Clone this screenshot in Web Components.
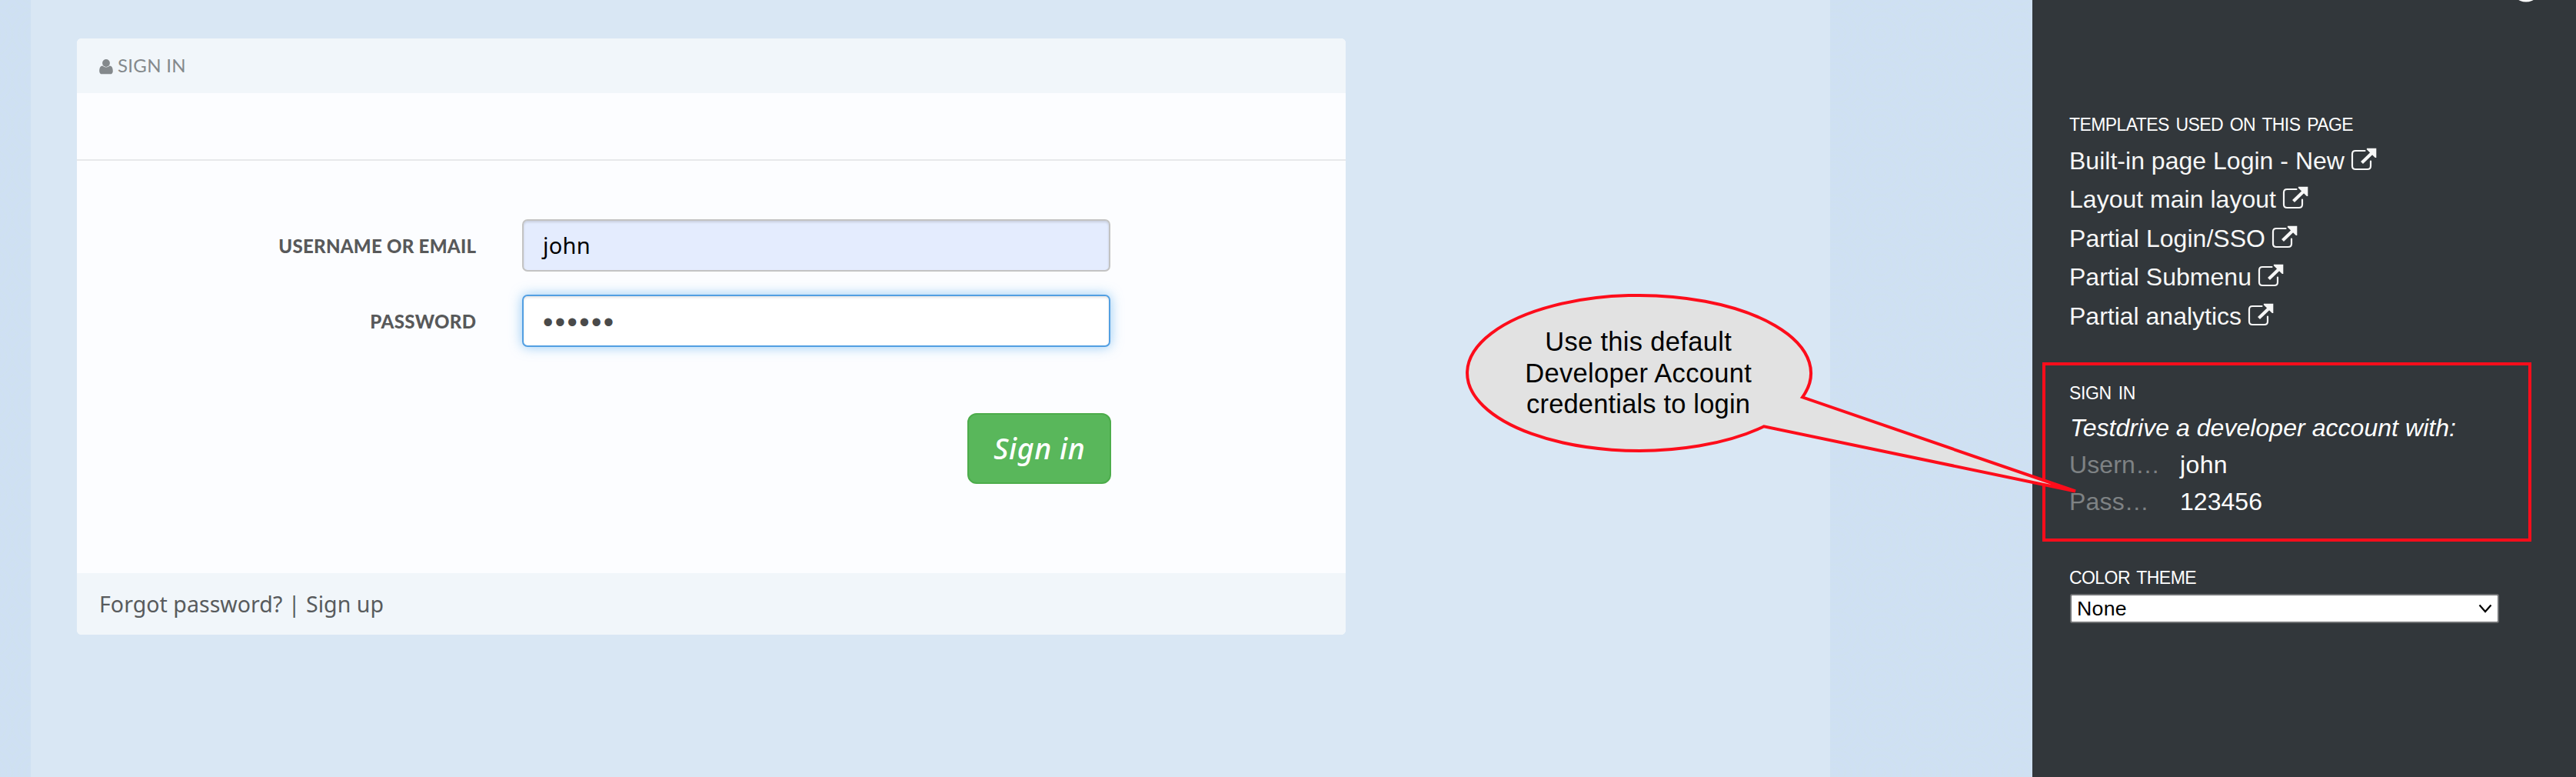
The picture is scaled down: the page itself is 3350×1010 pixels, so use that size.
<!DOCTYPE html>
<html lang="en">
<head>
<meta charset="utf-8">
<title>Sign in</title>
<style>
html,body{margin:0;height:1010px;overflow:hidden}
body{font-family:"Liberation Sans",sans-serif}
</style>
</head>
<body>
<portal-page></portal-page>
<script>
const define=(name,html,setup)=>customElements.define(name,class extends HTMLElement{
  connectedCallback(){
    if(this.shadowRoot)return;
    this.attachShadow({mode:'open'}).innerHTML=html;
    if(setup)setup(this,this.shadowRoot);
  }
});

// One line of text tracked out to a given advance width.
define('fit-text',`<style>:host{display:block;white-space:pre}span{display:inline-block;white-space:pre}</style><span><slot></slot></span>`,(el,root)=>{
  const span=root.querySelector('span'),n=el.textContent.length,w=+el.getAttribute('w');
  if(w){
    const ls=(w-span.getBoundingClientRect().width)/n;
    span.style.letterSpacing=ls+'px';
    span.style.marginRight=-ls+'px';
  }
});

define('icon-user',`<style>:host{display:block;width:18px;height:20px}svg{display:block}</style>
<svg width="18" height="20" viewBox="0 0 18 20" fill="#84898c"><ellipse cx="9" cy="5" rx="4.9" ry="5"/><path d="M4.4 8.6C1.4 8.8.2 11.6.2 15.400c0 2.400 1.300 3.900 3.300 3.900h11c2 0 3.300-1.500 3.300-3.900 0-3.800-1.200-6.600-4.200-6.800A6.400 6.400 0 0 1 9 10.600 6.400 6.400 0 0 1 4.400 8.600z"/></svg>`);

define('icon-external',`<style>:host{display:block;width:34px;height:30px}svg{display:block}</style>
<svg width="34" height="30" viewBox="0 0 34 30" fill="none"><path d="M18.500 4H6.300Q2 4 2 8.300v15.400Q2 28 6.300 28h15.400Q26 28 26 23.700V17.500" stroke="#f7f7f7" stroke-width="2.200" stroke-linecap="round"/><path d="M14.500 19.500L28 6.500" stroke="#f7f7f7" stroke-width="4.200"/><path d="M21 .7h12.300v12.200h-1.500L20.800 2.200z" fill="#f7f7f7"/></svg>`);

define('side-title',`<style>:host{display:block;height:30px;line-height:30px;font-size:23px;color:#fff;word-spacing:3px}</style><slot></slot>`);

define('template-link',`<style>:host{display:flex;align-items:flex-start;height:50.500px;line-height:50.500px;font-size:32px;color:#f7f7f7;gap:8px}icon-external{margin-top:8px}</style><slot></slot><icon-external></icon-external>`);

define('credential-row',`<style>:host{display:flex;height:48px;line-height:48px;font-size:32px;color:#fff}.k{width:144px;color:#7e8284}</style><div class="k"><slot name="key"></slot></div><slot></slot>`);

define('theme-select',`<style>:host{display:flex;box-sizing:border-box;width:558px;height:38px;border:2px solid #6f7173;border-radius:3px;background:#fff;color:#000;font-size:26.700px;line-height:34px;padding:0 7px 0 7px;align-items:center;justify-content:space-between}</style><slot></slot><svg width="18" height="12" viewBox="0 0 18 12" fill="none" stroke="#000" stroke-width="2.200"><path d="M1.500 1.500L9 10l7.500-8.500"/></svg>`);

define('side-panel',`<style>
:host{display:flex;flex-direction:column;box-sizing:border-box;width:707px;height:1010px;background:#32373b;padding-left:48px;overflow:hidden}
.top{height:147px;display:flex;align-items:flex-start;padding-left:580px}
.links{margin:6.500px 0 60px}
.about{font-style:italic;font-size:32px;line-height:48px;color:#fff;margin-top:6px;padding-left:1px}
.creds{margin-bottom:60px}
theme-select{margin:6px 0 0 1px}
</style>
<div class="top"><svg width="24" height="3" viewBox="0 0 24 3"><circle cx="14" cy="-17.500" r="20" fill="#fff"/></svg></div>
<side-title><fit-text w="369">TEMPLATES USED ON THIS PAGE</fit-text></side-title>
<div class="links">
<template-link><fit-text w="358">Built-in page Login - New</fit-text></template-link>
<template-link><fit-text w="269">Layout main layout</fit-text></template-link>
<template-link><fit-text w="255">Partial Login/SSO</fit-text></template-link>
<template-link><fit-text w="237">Partial Submenu</fit-text></template-link>
<template-link><fit-text w="224">Partial analytics</fit-text></template-link>
</div>
<side-title><fit-text w="86">SIGN IN</fit-text></side-title>
<div class="about"><fit-text w="502">Testdrive a developer account with:</fit-text></div>
<div class="creds">
<credential-row><fit-text slot="key" w="118">Usern…</fit-text><fit-text w="62">john</fit-text></credential-row>
<credential-row><fit-text slot="key" w="104">Pass…</fit-text><fit-text w="107">123456</fit-text></credential-row>
</div>
<side-title><fit-text w="165">COLOR THEME</fit-text></side-title>
<theme-select><fit-text w="65">None</fit-text></theme-select>`);

define('form-row',`<style>
:host{display:flex;height:68px;align-items:center;gap:60px}
.label{width:519px;display:flex;justify-content:flex-end;font:900 24px/30px Lato,sans-serif;color:#58595a;padding-top:2px}
.box{box-sizing:border-box;width:765px;height:68px;border:2px solid #c3c3c3;border-radius:7px;background:#e4ecfe;box-shadow:inset 0 2px 3px rgba(0,0,0,.12);padding-left:25px;display:flex;align-items:center;font:29px/60px "Noto Sans",sans-serif;color:#000}
:host([focused]) .box{background:#fff;border-color:#529fe2;box-shadow:inset 0 2px 3px rgba(0,0,0,.1),0 0 16px rgba(82,168,236,.6);color:#4a4a4a;font:38px/60px "Liberation Sans",sans-serif;padding-top:4px}
</style><div class="label"><slot name="label"></slot></div><div class="box"><slot></slot></div>`);

define('submit-button',`<style>:host{display:flex;box-sizing:border-box;width:187px;height:92px;border:2px solid #4cac4b;border-radius:12px;background:#59b75b;color:#fff;font:italic 500 37.500px/88px "Noto Sans","Open Sans",sans-serif;justify-content:center;align-items:center}</style><slot></slot>`);

define('login-card',`<style>
:host{display:block;width:1650px;height:775px;border-radius:6px;overflow:hidden;background:#fcfdff}
header{height:71px;box-sizing:border-box;background:#f1f6fa;display:flex;align-items:center;gap:6px;padding:0 0 1px 29px;font:24px/30px Lato,sans-serif;color:#84898c}
header icon-user{margin-top:3px}
.sub{height:88px;box-sizing:border-box;border-bottom:2px solid #e7e9eb}
.body{height:536px;box-sizing:border-box;padding-top:76px;display:flex;flex-direction:column;gap:30px}
.act{margin:56px 0 0 1158px}
footer{height:80px;background:#f1f6fa;display:flex;align-items:center;padding-left:29px;font:28.500px/78px "Noto Sans",sans-serif;color:#585b5d}
</style>
<header><icon-user></icon-user><fit-text w="89">SIGN IN</fit-text></header>
<div class="sub"></div>
<div class="body">
<form-row><fit-text slot="label" w="257">USERNAME OR EMAIL</fit-text><fit-text w="62">john</fit-text></form-row>
<form-row focused><fit-text slot="label" w="138">PASSWORD</fit-text><fit-text w="94.500">••••••</fit-text></form-row>
<div class="act"><submit-button><fit-text w="119">Sign in</fit-text></submit-button></div>
</div>
<footer><fit-text w="370">Forgot password? | Sign up</fit-text></footer>`);

define('callout-note',`<style>
:host{position:absolute;inset:0;pointer-events:none}
svg{position:absolute;left:0;top:0}
.text{position:absolute;left:1907px;top:424px;width:447px;display:flex;flex-direction:column;align-items:center;font-size:34.500px;line-height:40.500px;color:#000}
</style>
<svg width="3350" height="1010" viewBox="0 0 3350 1010"><rect x="2658" y="473" width="632" height="229" fill="none" stroke="#fd0d1b" stroke-width="4"/><path d="M2344 516.300A223.500 101 0 1 0 2294 554.300L2699 638.500Z" fill="#e2e2e2" stroke="#fd0d1b" stroke-width="4" stroke-linejoin="miter" stroke-miterlimit="3"/></svg>
<div class="text"><fit-text w="243">Use this default</fit-text><fit-text w="295">Developer Account</fit-text><fit-text w="291">credentials to login</fit-text></div>`);

define('portal-page',`<style>
:host{display:flex;position:relative;width:3350px;height:1010px;overflow:hidden;background-color:#cfe0f2;background-image:repeating-radial-gradient(circle at 30px 30px,#cfe0f3 0,#cfe0f3 3px,#cfe1f0 6px,#cfe0f3 8px);background-size:60px 60px;background-position:16px 14px}
main{margin:0 263px 0 40px;width:2340px;box-sizing:border-box;background:#d9e7f4;padding:50px 0 0 60px}
</style><main><login-card></login-card></main><side-panel></side-panel><callout-note></callout-note>`);
</script>
</body>
</html>
